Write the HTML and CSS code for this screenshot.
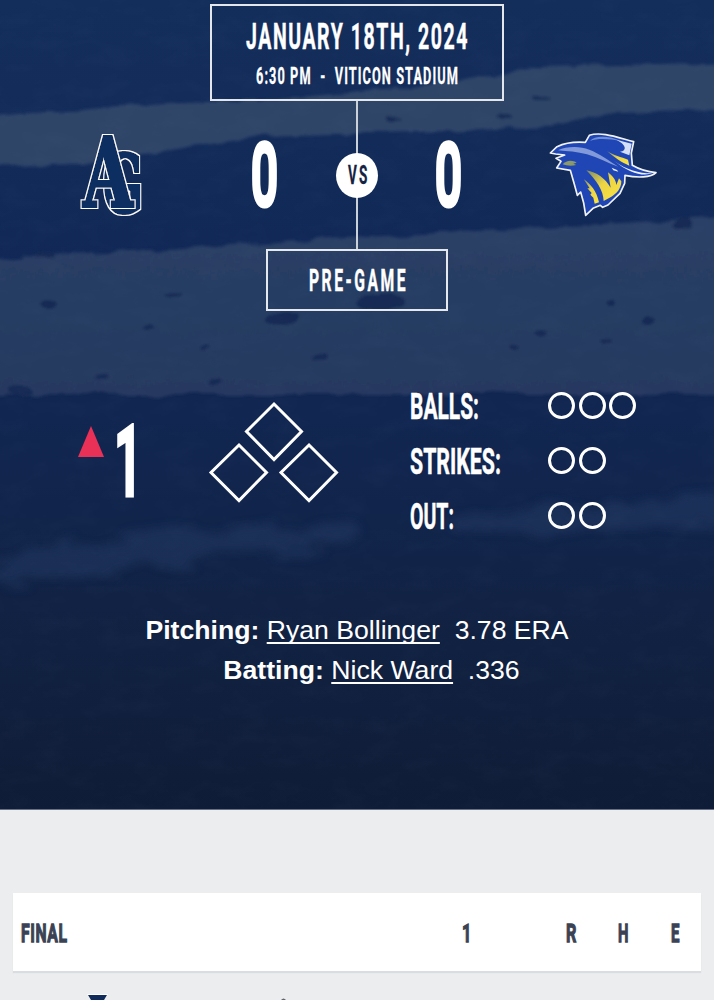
FILE: index.html
```html
<!DOCTYPE html>
<html lang="en">
<head>
<meta charset="utf-8">
<title>Game Day</title>
<link rel="stylesheet" href="styles.css">
</head>
<body>
<main class="page">
  <section class="hero">
    <svg class="field" viewBox="0 0 714 810" aria-hidden="true">
      <defs>
        <linearGradient id="night" x1="0" y1="0" x2="0" y2="1">
          <stop offset="0" stop-color="#142e5c"/><stop offset=".35" stop-color="#112856"/>
          <stop offset=".6" stop-color="#11254d"/><stop offset=".8" stop-color="#112141"/><stop offset="1" stop-color="#0f1c37"/>
        </linearGradient>
        <linearGradient id="dirt" x1="0" y1="0" x2="0" y2="1"><stop offset="0" stop-color="#2a4066"/><stop offset="1" stop-color="#253960"/></linearGradient>
        <filter id="rough" x="-5%" y="-10%" width="110%" height="120%">
          <feTurbulence type="fractalNoise" baseFrequency=".035 .07" numOctaves="3" seed="4" result="n"/>
          <feDisplacementMap in="SourceGraphic" in2="n" scale="10" xChannelSelector="R" yChannelSelector="G"/><feGaussianBlur stdDeviation="1.8"/>
        </filter>
        <filter id="grain" x="0" y="0" width="100%" height="100%">
          <feTurbulence type="fractalNoise" baseFrequency=".03 .06" numOctaves="4" seed="9"/>
          <feColorMatrix values="0 0 0 0 .35  0 0 0 0 .45  0 0 0 0 .65  .9 0 0 0 -.38"/>
        </filter>
        <filter id="soft" x="-20%" y="-60%" width="140%" height="220%">
          <feTurbulence type="fractalNoise" baseFrequency=".025 .08" numOctaves="3" seed="6" result="n"/>
          <feDisplacementMap in="SourceGraphic" in2="n" scale="32" xChannelSelector="R" yChannelSelector="G"/><feGaussianBlur stdDeviation="4"/>
        </filter>
      </defs>
      <rect width="714" height="810" fill="url(#night)"/>
      <g filter="url(#rough)">
        <path d="M-20 117L100 108L210 103L340 94L450 82L540 67L740 62V108L620 112L560 125L450 132L260 137L150 153L80 163L-20 166Z" fill="#2d4468"/>
        <path d="M-20 259L150 250L330 239L500 230L740 216V394H-20Z" fill="url(#dirt)"/>
        <g fill="#172c54">
          <ellipse cx="380" cy="302" rx="25" ry="8"/><ellipse cx="282" cy="318" rx="16" ry="7"/>
          <ellipse cx="683" cy="224" rx="8" ry="5"/><ellipse cx="48" cy="304" rx="8" ry="4"/>
          <ellipse cx="175" cy="295" rx="9" ry="3"/><ellipse cx="149" cy="328" rx="6" ry="3"/>
          <ellipse cx="206" cy="348" rx="5" ry="3"/><ellipse cx="103" cy="377" rx="6" ry="3"/>
          <ellipse cx="216" cy="382" rx="7" ry="3"/><ellipse cx="318" cy="358" rx="9" ry="2"/>
          <ellipse cx="540" cy="332" rx="8" ry="3"/><ellipse cx="606" cy="341" rx="6" ry="3"/>
          <ellipse cx="646" cy="322" rx="6" ry="4"/><ellipse cx="514" cy="348" rx="5" ry="2"/>
          <ellipse cx="609" cy="304" rx="5" ry="3"/><ellipse cx="20" cy="390" rx="14" ry="4"/>
          <ellipse cx="394" cy="118" rx="8" ry="2"/><ellipse cx="504" cy="118" rx="9" ry="3"/>
          <ellipse cx="541" cy="98" rx="11" ry="2"/><ellipse cx="45" cy="256" rx="10" ry="3"/>
        </g>
      </g>
      <g filter="url(#soft)" fill="#223960" opacity=".6">
        <path d="M-10 564L50 544L180 531L360 522L350 544L200 558L70 582L-10 585Z"/>
        <path d="M440 521L560 506L740 495V524L590 531L460 533Z"/>
      </g>
      <rect width="714" height="810" filter="url(#grain)" opacity=".06"/>
    </svg>

    <div class="date-box">
      <svg class="text date" viewBox="0 0 222 27"><text y="27" textLength="223" lengthAdjust="spacingAndGlyphs">JANUARY 18TH, 2024</text></svg>
      <svg class="text venue" viewBox="0 0 201 17"><text x="-1" y="17" textLength="203" lengthAdjust="spacingAndGlyphs" xml:space="preserve">6:30 PM  -  VITICON STADIUM</text></svg>
    </div>

    <div class="matchup">
      <svg class="logo-ag" viewBox="0 0 63 84" role="img" aria-label="AG">
        <defs>
          <filter id="outline" x="-20%" y="-20%" width="140%" height="140%">
            <feMorphology in="SourceAlpha" operator="dilate" radius="2.400" result="wide"/>
            <feFlood flood-color="#fff"/><feComposite in2="wide" operator="in" result="edge"/>
            <feMorphology in="SourceGraphic" operator="dilate" radius="1" result="body"/>
            <feMerge><feMergeNode in="edge"/><feMergeNode in="body"/></feMerge>
          </filter>
        </defs>
        <g class="monogram">
          <text x="22" y="80" font-size="83" textLength="40" lengthAdjust="spacingAndGlyphs" filter="url(#outline)">G</text>
          <text x="2" y="73.500" font-size="97" textLength="50" lengthAdjust="spacingAndGlyphs" filter="url(#outline)">A</text>
        </g>
      </svg>
      <svg class="text score" viewBox="0 0 25 67"><text x="-.5" y="63" textLength="26" lengthAdjust="spacingAndGlyphs">0</text></svg>
      <div class="versus"><div class="vs-badge"><svg class="text vs" viewBox="0 0 19 18"><text x="0" y="18" textLength="21.500" lengthAdjust="spacingAndGlyphs">VS</text></svg></div></div>
      <svg class="text score" viewBox="0 0 25 67"><text x="-.5" y="63" textLength="26" lengthAdjust="spacingAndGlyphs">0</text></svg>
      <svg class="logo-rider" viewBox="27 39 324 252" aria-hidden="true">
        <defs><linearGradient id="gold" x1="0" y1="0" x2="1" y2="1"><stop offset="0" stop-color="#7c8c68"/><stop offset=".45" stop-color="#ecd444"/><stop offset="1" stop-color="#fbe443"/></linearGradient></defs>
        <path d="M31 99L51 80C76 68 108 65 136 67L148 46C184 34 231 52 281 65L274 99L277 136C303 151 325 156 348 158C333 173 292 174 255 166L254 190L240 220L204 255L188 262L181 256L159 265L137 286L131 249L122 216L112 226L103 193L91 151L50 144L63 124L48 115L74 105L47 102Z" fill="#1f46b4" stroke="#f1f3f7" stroke-width="5" stroke-linejoin="round"/>
        <path d="M54 91C80 79 119 78 148 89C178 100 208 123 235 140C204 130 174 112 141 103C112 95 82 94 54 91Z" fill="#829ada"/>
        <path d="M150 63C165 45 208 48 243 63C208 57 175 54 150 63Z" fill="#6f8ed8"/>
        <path d="M229 59L275 71L268 106L240 95C262 92 259 74 229 59Z" fill="#d5dff8"/>
        <path d="M201 93C220 106 244 111 264 119L268 137C245 127 225 114 201 93Z" fill="url(#gold)"/>
        <path d="M222 122C261 151 302 161 338 160C307 170 268 159 222 122Z" fill="#edf1ff"/>
        <path d="M68 133C78 120 98 119 110 128L100 131L109 135C94 139 78 137 68 133Z" fill="#8b9a68"/>
        <path d="M139 151C170 157 195 174 212 203L204 157C219 169 228 180 229 195L237 175L244 184C244 206 229 222 214 230L191 243C190 211 169 181 139 151Z" fill="url(#gold)"/>
        <path d="M131 177C152 193 170 212 177 247L164 251L160 233L151 224L155 219L142 205L149 205Z" fill="url(#gold)"/>
        <path d="M215 143L231 150L235 155L220 151Z" fill="#e9efff"/>
      </svg>
    </div>

    <div class="status-box"><svg class="text status" viewBox="0 0 97 22"><text x="0" y="22" textLength="99" lengthAdjust="spacingAndGlyphs">PRE-GAME</text></svg></div>

    <div class="situation">
      <div class="inning">
        <svg class="half" viewBox="0 0 26 31"><path d="M13 0L26 31H0Z"/></svg>
        <svg class="text inning-number" viewBox="0 0 16 73"><text x="-4" y="72" textLength="28" lengthAdjust="spacingAndGlyphs">1</text></svg>
      </div>
      <svg class="bases" viewBox="0 0 130 101">
        <path d="M65 2L92.500 29.500L65 57.500L37.500 29.500ZM30 43L57.500 70.500L30 98.500L2 70.500ZM100 43L127.500 70.500L100 98.500L72 70.500Z"/>
      </svg>
      <div class="counts">
        <svg class="text count-label" viewBox="0 0 90 27"><text y="27" textLength="69" lengthAdjust="spacingAndGlyphs">BALLS:</text></svg>
        <div class="pips"><i></i><i></i><i></i></div>
        <svg class="text count-label" viewBox="0 0 90 27"><text y="27" textLength="91" lengthAdjust="spacingAndGlyphs">STRIKES:</text></svg>
        <div class="pips"><i></i><i></i></div>
        <svg class="text count-label" viewBox="0 0 90 27"><text y="27" textLength="44" lengthAdjust="spacingAndGlyphs">OUT:</text></svg>
        <div class="pips"><i></i><i></i></div>
      </div>
    </div>

    <div class="players">
      <p><b>Pitching:</b> <a>Ryan Bollinger</a>&nbsp; 3.78 ERA</p>
      <p class="batting"><b>Batting:</b> <a>Nick Ward</a>&nbsp; .336</p>
    </div>
  </section>

  <section class="linescore">
    <div class="line-head">
      <svg class="text cell" viewBox="0 0 46 19"><text y="18.500" textLength="46.500" lengthAdjust="spacingAndGlyphs">FINAL</text></svg>
      <svg class="text cell" viewBox="0 0 46 19"><text x="-2" y="18.500" textLength="10" lengthAdjust="spacingAndGlyphs">1</text></svg>
      <svg class="text cell" viewBox="0 0 46 19"><text y="18.500" textLength="11" lengthAdjust="spacingAndGlyphs">R</text></svg>
      <svg class="text cell" viewBox="0 0 46 19"><text y="18.500" textLength="11" lengthAdjust="spacingAndGlyphs">H</text></svg>
      <svg class="text cell" viewBox="0 0 46 19"><text y="18.500" textLength="9" lengthAdjust="spacingAndGlyphs">E</text></svg>
    </div>
    <div class="line-row">
      <svg class="row-logo" viewBox="0 0 21 6"><path d="M0 0H21L17 6H4Z" fill="#fff"/><path d="M1 1H20L17 6H4Z" fill="#112b5b"/></svg>
      <svg class="row-mark" viewBox="0 0 5 2"><path d="M0 2Q2.500 -1 5 2Z" fill="#62656c"/></svg>
    </div>
  </section>
</main>
</body>
</html>
```

FILE: styles.css
```css
* { box-sizing: border-box; }
body { margin: 0; background: #ebedef; font-family: "Liberation Sans", Arial, sans-serif; }
.page { width: 714px; height: 1000px; overflow: hidden; }
svg { display: block; overflow: visible; }
.hero { position: relative; height: 810px; padding-top: 4px; border-bottom: 1px solid #687086; color: #fff; display: flex; flex-direction: column; align-items: center; isolation: isolate; overflow: hidden; }
.field { position: absolute; inset: 0; z-index: -1; width: 714px; height: 810px; overflow: hidden; }

.text { font-family: Roboto, "Liberation Sans", sans-serif; font-weight: 700; fill: #fff; stroke: #fff; stroke-width: .5px; }
.date-box { width: 294px; height: 97px; border: 2px solid #e3e7ec; padding-top: 16px; display: flex; flex-direction: column; align-items: center; gap: 18px; }
.date { width: 222px; height: 27px; font-size: 37.500px; letter-spacing: 3px; }
.venue { width: 201px; height: 17px; font-size: 24px; letter-spacing: 2px; stroke-width: .3px; }

.matchup { width: 714px; height: 148px; padding-left: 81px; display: grid; grid-template-columns: 171px 84px 100px 113px 108px; align-items: start; }
.logo-ag { width: 63px; height: 84px; margin-top: 32px; }
.monogram { font-family: "DejaVu Serif", serif; font-weight: 700; fill: #112d61; }
.score { width: 25px; height: 67px; margin-top: 40px; font-size: 83px; font-weight: 400; stroke-width: 7px; stroke-linejoin: round; }
.versus { width: 42px; height: 148px; display: grid; place-items: center; background: linear-gradient(#cbd1d8, #cbd1d8) center / 2px 100% no-repeat; }
.vs-badge { width: 42px; height: 45px; border-radius: 50%; background: #fff; display: grid; place-items: center; }
.vs { width: 19px; height: 18px; font-size: 25px; letter-spacing: 4px; fill: #142342; stroke: #142342; stroke-width: .3px; }
.logo-rider { width: 108px; height: 84px; margin-top: 32px; }

.status-box { width: 182px; height: 62px; border: 2px solid #e5e8ed; display: grid; place-items: center; }
.status { width: 97px; height: 22px; font-size: 31px; letter-spacing: 5px; stroke-width: .5px; }

.situation { width: 714px; height: 139px; margin-top: 80px; padding-left: 78px; display: grid; grid-template-columns: 131px 201px auto; align-items: start; }
.inning { display: flex; align-items: flex-start; gap: 14px; padding-top: 33px; }
.half { width: 26px; height: 31px; margin-top: 2px; fill: #e93158; }
.inning-number { width: 16px; height: 73px; font-size: 100px; stroke-width: 3px; }
.bases { width: 130px; height: 101px; margin-top: 11px; fill: none; stroke: #fff; stroke-width: 3px; }
.counts { display: grid; grid-template-columns: 138px auto; grid-auto-rows: 29px; row-gap: 26px; align-items: center; }
.count-label { width: 90px; height: 27px; font-size: 37.500px; }
.pips { display: flex; gap: 3.500px; }
.pips i { width: 27px; height: 27px; border: 3px solid #fff; border-radius: 50%; }

.players { width: 714px; margin-top: 80px; font-size: 26.630px; line-height: 40px; text-align: center; white-space: nowrap; }
.players p { margin: 0; }
.players .batting { padding-left: 29px; }
.players a { text-decoration: underline; text-decoration-thickness: 2px; text-underline-offset: 3px; text-decoration-skip-ink: none; }

.linescore { padding: 83px 13px 0; }
.line-head { height: 78px; padding-left: 8px; background: #fff; box-shadow: 0 2px 1px #d9dce0; display: grid; grid-template-columns: 443px 102px 52px 53px auto; align-items: center; }
.cell { width: 46px; height: 19px; font-size: 26.500px; letter-spacing: 1px; fill: #3b4254; stroke: #3b4254; stroke-width: 1.300px; }
.line-row { display: flex; align-items: flex-end; padding: 23px 0 0 74px; height: 29px; gap: 173px; }
.row-logo { width: 21px; height: 6px; }
.row-mark { width: 5px; height: 2px; }
```
